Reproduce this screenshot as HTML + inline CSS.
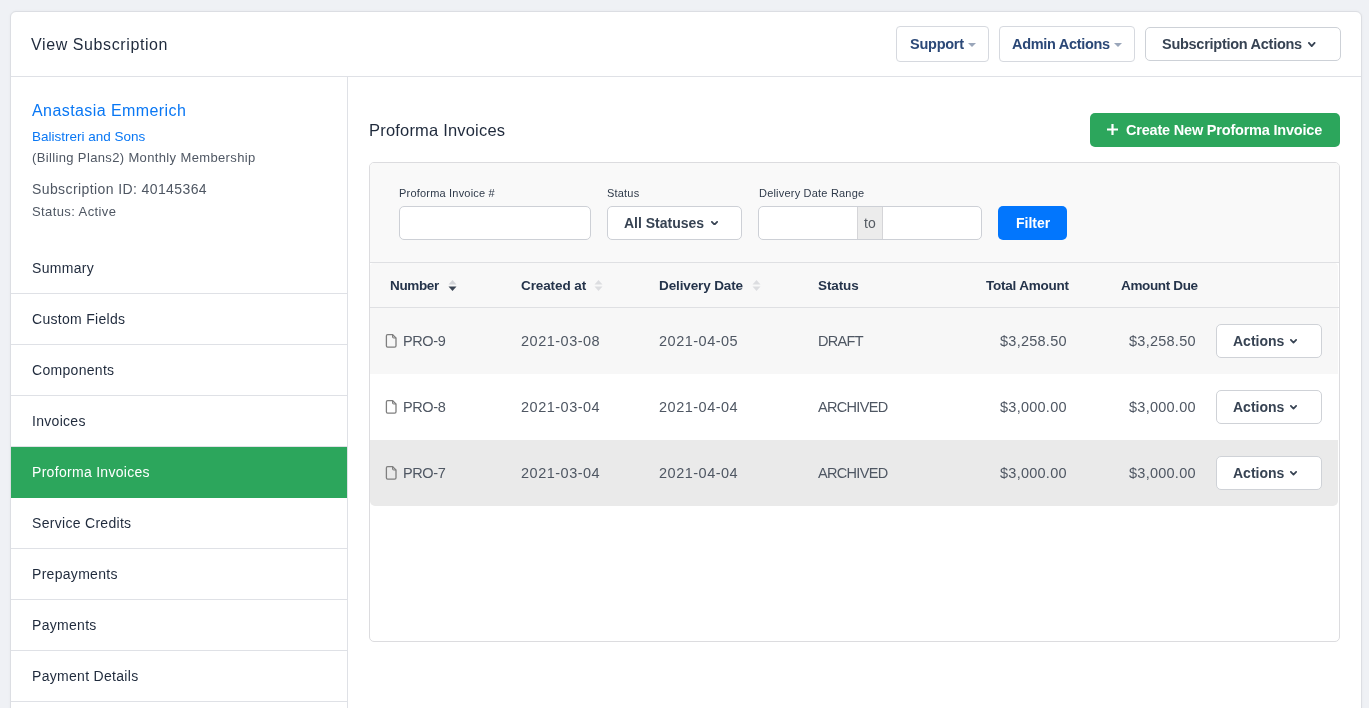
<!DOCTYPE html>
<html><head><meta charset="utf-8">
<style>
*{box-sizing:border-box;margin:0;padding:0}
html,body{width:1369px;height:708px;overflow:hidden}
body{background:#eff1f5;font-family:"Liberation Sans",sans-serif;position:relative}
.t{position:absolute;white-space:nowrap;will-change:transform}
.r{position:absolute}
</style></head><body>
<div class="r" style="left:10px;top:11px;width:1352px;height:760px;background:#fff;border:1px solid #dcdee3;border-radius:6px;box-shadow:0 0 3px rgba(0,0,0,0.04)"></div>
<div class="r" style="left:11px;top:76px;width:1350px;height:1px;background:#dfe1e6"></div>
<div class="t" style="left:31.40px;top:37.06px;font-size:16px;line-height:16px;font-weight:400;color:#1f2a3c;letter-spacing:0.6px;">View Subscription</div>
<div class="r" style="left:896px;top:26px;width:93px;height:36px;background:#fff;border:1px solid #d6d9df;border-radius:4px"></div>
<div class="t" style="left:909.80px;top:36.63px;font-size:14.5px;line-height:14.5px;font-weight:700;color:#2b4877;letter-spacing:-0.25px;">Support</div>
<svg class="r" style="left:968px;top:43px" width="8" height="4" viewBox="0 0 8 4"><path d="M0 0H8L4.0 4Z" fill="#9aa6ba"/></svg>
<div class="r" style="left:999px;top:26px;width:136px;height:36px;background:#fff;border:1px solid #d6d9df;border-radius:4px"></div>
<div class="t" style="left:1011.90px;top:36.63px;font-size:14.5px;line-height:14.5px;font-weight:700;color:#2b4877;letter-spacing:-0.3px;">Admin Actions</div>
<svg class="r" style="left:1114px;top:43px" width="8" height="4" viewBox="0 0 8 4"><path d="M0 0H8L4.0 4Z" fill="#9aa6ba"/></svg>
<div class="r" style="left:1145px;top:27px;width:196px;height:34px;background:#fff;border:1px solid #cdd1d7;border-radius:5px"></div>
<div class="t" style="left:1162.40px;top:36.63px;font-size:14.5px;line-height:14.5px;font-weight:700;color:#374353;letter-spacing:-0.27px;">Subscription Actions</div>
<svg class="r" style="left:1308px;top:42px" width="7.5" height="5" viewBox="0 0 7.5 5"><path d="M0.9 0.9L3.75 4.1L6.6 0.9" fill="none" stroke="#374353" stroke-width="1.8" stroke-linecap="round" stroke-linejoin="round"/></svg>
<div class="r" style="left:347px;top:77px;width:1px;height:700px;background:#dfe1e6"></div>
<div class="t" style="left:32.00px;top:103.46px;font-size:16px;line-height:16px;font-weight:400;color:#0977f4;letter-spacing:0.42px;">Anastasia Emmerich</div>
<div class="t" style="left:32.00px;top:129.57px;font-size:13.5px;line-height:13.5px;font-weight:400;color:#0977f4;letter-spacing:0.0px;">Balistreri and Sons</div>
<div class="t" style="left:32.00px;top:150.80px;font-size:13px;line-height:13px;font-weight:400;color:#4f5763;letter-spacing:0.36px;">(Billing Plans2) Monthly Membership</div>
<div class="t" style="left:32.00px;top:182.05px;font-size:14px;line-height:14px;font-weight:400;color:#4f5763;letter-spacing:0.4px;">Subscription ID: 40145364</div>
<div class="t" style="left:32.00px;top:204.80px;font-size:13px;line-height:13px;font-weight:400;color:#4f5763;letter-spacing:0.4px;">Status: Active</div>
<div class="t" style="left:31.50px;top:261.05px;font-size:14px;line-height:14px;font-weight:400;color:#1f2a3c;letter-spacing:0.3px;">Summary</div>
<div class="r" style="left:11px;top:293px;width:336px;height:1px;background:#dfe1e6"></div>
<div class="t" style="left:31.50px;top:312.05px;font-size:14px;line-height:14px;font-weight:400;color:#1f2a3c;letter-spacing:0.3px;">Custom Fields</div>
<div class="r" style="left:11px;top:344px;width:336px;height:1px;background:#dfe1e6"></div>
<div class="t" style="left:31.50px;top:363.05px;font-size:14px;line-height:14px;font-weight:400;color:#1f2a3c;letter-spacing:0.3px;">Components</div>
<div class="r" style="left:11px;top:395px;width:336px;height:1px;background:#dfe1e6"></div>
<div class="t" style="left:31.50px;top:414.05px;font-size:14px;line-height:14px;font-weight:400;color:#1f2a3c;letter-spacing:0.3px;">Invoices</div>
<div class="r" style="left:11px;top:446px;width:336px;height:1px;background:#dfe1e6"></div>
<div class="r" style="left:11px;top:447px;width:336px;height:51px;background:#2ca65c"></div>
<div class="t" style="left:31.50px;top:465.05px;font-size:14px;line-height:14px;font-weight:400;color:#ffffff;letter-spacing:0.3px;">Proforma Invoices</div>
<div class="t" style="left:31.50px;top:516.05px;font-size:14px;line-height:14px;font-weight:400;color:#1f2a3c;letter-spacing:0.3px;">Service Credits</div>
<div class="r" style="left:11px;top:548px;width:336px;height:1px;background:#dfe1e6"></div>
<div class="t" style="left:31.50px;top:567.05px;font-size:14px;line-height:14px;font-weight:400;color:#1f2a3c;letter-spacing:0.3px;">Prepayments</div>
<div class="r" style="left:11px;top:599px;width:336px;height:1px;background:#dfe1e6"></div>
<div class="t" style="left:31.50px;top:618.05px;font-size:14px;line-height:14px;font-weight:400;color:#1f2a3c;letter-spacing:0.3px;">Payments</div>
<div class="r" style="left:11px;top:650px;width:336px;height:1px;background:#dfe1e6"></div>
<div class="t" style="left:31.50px;top:669.05px;font-size:14px;line-height:14px;font-weight:400;color:#1f2a3c;letter-spacing:0.3px;">Payment Details</div>
<div class="r" style="left:11px;top:701px;width:336px;height:1px;background:#dfe1e6"></div>
<div class="r" style="left:11px;top:752px;width:336px;height:1px;background:#dfe1e6"></div>
<div class="t" style="left:369.10px;top:122.03px;font-size:16.5px;line-height:16.5px;font-weight:400;color:#1f2a3c;letter-spacing:0.19px;">Proforma Invoices</div>
<div class="r" style="left:1090px;top:113px;width:250px;height:34px;background:#2ca65c;border-radius:5px"></div>
<svg class="r" style="left:1106.5px;top:124px" width="11" height="11" viewBox="0 0 11 11"><path d="M5.5 0V11M0 5.5H11" stroke="#fff" stroke-width="2.2"/></svg>
<div class="t" style="left:1126.00px;top:122.93px;font-size:14.5px;line-height:14.5px;font-weight:700;color:#fff;letter-spacing:-0.2px;">Create New Proforma Invoice</div>
<div class="r" style="left:369px;top:162px;width:971px;height:480px;background:#fff;border:1px solid #dcdcdf;border-radius:5px"></div>
<div class="r" style="left:370px;top:163px;width:969px;height:99px;background:#f9f9f9;border-radius:4px 4px 0 0"></div>
<div class="r" style="left:370px;top:263px;width:968px;height:44px;background:#f8f8f8;border-radius:4px 4px 0 0"></div>
<div class="t" style="left:398.80px;top:187.59px;font-size:11px;line-height:11px;font-weight:400;color:#2f3a4a;letter-spacing:0.2px;">Proforma Invoice #</div>
<div class="r" style="left:399px;top:206px;width:192px;height:34px;background:#fff;border:1px solid #cdd0d6;border-radius:5px"></div>
<div class="t" style="left:607.00px;top:187.59px;font-size:11px;line-height:11px;font-weight:400;color:#2f3a4a;letter-spacing:0.2px;">Status</div>
<div class="r" style="left:607px;top:206px;width:135px;height:34px;background:#fff;border:1px solid #cdd0d6;border-radius:5px"></div>
<div class="t" style="left:624.10px;top:215.75px;font-size:14px;line-height:14px;font-weight:700;color:#374353;letter-spacing:0px;">All Statuses</div>
<svg class="r" style="left:710.5px;top:220.5px" width="7" height="4.5" viewBox="0 0 7 4.5"><path d="M0.85 0.85L3.5 3.65L6.15 0.85" fill="none" stroke="#374353" stroke-width="1.7" stroke-linecap="round" stroke-linejoin="round"/></svg>
<div class="t" style="left:758.80px;top:187.59px;font-size:11px;line-height:11px;font-weight:400;color:#2f3a4a;letter-spacing:0.2px;">Delivery Date Range</div>
<div class="r" style="left:758px;top:206px;width:224px;height:34px;background:#fff;border:1px solid #cdd0d6;border-radius:5px"></div>
<div class="r" style="left:857px;top:207px;width:26px;height:32px;background:#ececec;border-left:1px solid #d5d5d8;border-right:1px solid #d5d5d8"></div>
<div class="t" style="left:864.00px;top:215.75px;font-size:14px;line-height:14px;font-weight:400;color:#555b63;letter-spacing:0px;">to</div>
<div class="r" style="left:998px;top:206px;width:69px;height:34px;background:#0276fd;border-radius:5px"></div>
<div class="t" style="left:1015.90px;top:215.75px;font-size:14px;line-height:14px;font-weight:700;color:#fff;letter-spacing:0px;">Filter</div>
<div class="r" style="left:370px;top:262px;width:969px;height:1px;background:#dfe0e3"></div>
<div class="r" style="left:370px;top:307px;width:969px;height:1px;background:#dfe0e3"></div>
<div class="t" style="left:389.90px;top:278.67px;font-size:13.5px;line-height:13.5px;font-weight:700;color:#25344b;letter-spacing:-0.35px;">Number</div>
<div class="t" style="left:520.60px;top:278.67px;font-size:13.5px;line-height:13.5px;font-weight:700;color:#25344b;letter-spacing:-0.1px;">Created at</div>
<div class="t" style="left:659.40px;top:278.67px;font-size:13.5px;line-height:13.5px;font-weight:700;color:#25344b;letter-spacing:-0.12px;">Delivery Date</div>
<div class="t" style="left:818.40px;top:278.67px;font-size:13.5px;line-height:13.5px;font-weight:700;color:#25344b;letter-spacing:-0.1px;">Status</div>
<div class="t" style="left:985.60px;top:278.67px;font-size:13.5px;line-height:13.5px;font-weight:700;color:#25344b;letter-spacing:-0.22px;">Total Amount</div>
<div class="t" style="left:1120.50px;top:278.67px;font-size:13.5px;line-height:13.5px;font-weight:700;color:#25344b;letter-spacing:-0.35px;">Amount Due</div>
<svg class="r" style="left:448px;top:279px" width="9" height="13" viewBox="0 0 9 13"><path d="M0.5 5.5L4.5 1L8.5 5.5Z" fill="#d2d4d8"/><path d="M0.5 7.5L4.5 12L8.5 7.5Z" fill="#3a4453"/></svg>
<svg class="r" style="left:594px;top:279px" width="9" height="13" viewBox="0 0 9 13"><path d="M0.5 5.5L4.5 1L8.5 5.5Z" fill="#dcdde0"/><path d="M0.5 7.5L4.5 12L8.5 7.5Z" fill="#dcdde0"/></svg>
<svg class="r" style="left:751.5px;top:279px" width="9" height="13" viewBox="0 0 9 13"><path d="M0.5 5.5L4.5 1L8.5 5.5Z" fill="#dcdde0"/><path d="M0.5 7.5L4.5 12L8.5 7.5Z" fill="#dcdde0"/></svg>
<div class="r" style="left:370px;top:308px;width:968px;height:66px;background:#f7f7f7;"></div>
<svg class="r" style="left:385px;top:333px" width="13" height="16" viewBox="0 0 13 16"><path d="M2.6 1.6H7.6L11 5V12.8Q11 14.2 9.6 14.2H2.6Q1.4 14.2 1.4 12.8V3Q1.4 1.6 2.6 1.6Z" fill="none" stroke="#7f7f7f" stroke-width="1.3" stroke-linejoin="round"/><path d="M7.6 1.6V3.8Q7.6 5 8.8 5H11" fill="none" stroke="#7f7f7f" stroke-width="1.2"/></svg>
<div class="t" style="left:402.80px;top:333.73px;font-size:14.5px;line-height:14.5px;font-weight:400;color:#4f5763;letter-spacing:-0.4px;">PRO-9</div>
<div class="t" style="left:520.60px;top:333.73px;font-size:14.5px;line-height:14.5px;font-weight:400;color:#4f5763;letter-spacing:0.5px;">2021-03-08</div>
<div class="t" style="left:659.40px;top:333.73px;font-size:14.5px;line-height:14.5px;font-weight:400;color:#4f5763;letter-spacing:0.5px;">2021-04-05</div>
<div class="t" style="left:818.40px;top:333.73px;font-size:14.5px;line-height:14.5px;font-weight:400;color:#4f5763;letter-spacing:-0.68px;">DRAFT</div>
<div class="t" style="right:302.50px;top:333.73px;font-size:14.5px;line-height:14.5px;font-weight:400;color:#4f5763;letter-spacing:0.25px;">$3,258.50</div>
<div class="t" style="right:173.00px;top:333.73px;font-size:14.5px;line-height:14.5px;font-weight:400;color:#4f5763;letter-spacing:0.25px;">$3,258.50</div>
<div class="r" style="left:1216px;top:324px;width:106px;height:34px;background:#fff;border:1px solid #cfd2d7;border-radius:5px"></div>
<div class="t" style="left:1233.20px;top:334.15px;font-size:14px;line-height:14px;font-weight:700;color:#374353;letter-spacing:0px;">Actions</div>
<svg class="r" style="left:1289.5px;top:339px" width="7" height="4.5" viewBox="0 0 7 4.5"><path d="M0.85 0.85L3.5 3.65L6.15 0.85" fill="none" stroke="#374353" stroke-width="1.7" stroke-linecap="round" stroke-linejoin="round"/></svg>
<div class="r" style="left:370px;top:374px;width:968px;height:66px;background:#ffffff;"></div>
<svg class="r" style="left:385px;top:399px" width="13" height="16" viewBox="0 0 13 16"><path d="M2.6 1.6H7.6L11 5V12.8Q11 14.2 9.6 14.2H2.6Q1.4 14.2 1.4 12.8V3Q1.4 1.6 2.6 1.6Z" fill="none" stroke="#7f7f7f" stroke-width="1.3" stroke-linejoin="round"/><path d="M7.6 1.6V3.8Q7.6 5 8.8 5H11" fill="none" stroke="#7f7f7f" stroke-width="1.2"/></svg>
<div class="t" style="left:402.80px;top:399.73px;font-size:14.5px;line-height:14.5px;font-weight:400;color:#4f5763;letter-spacing:-0.4px;">PRO-8</div>
<div class="t" style="left:520.60px;top:399.73px;font-size:14.5px;line-height:14.5px;font-weight:400;color:#4f5763;letter-spacing:0.5px;">2021-03-04</div>
<div class="t" style="left:659.40px;top:399.73px;font-size:14.5px;line-height:14.5px;font-weight:400;color:#4f5763;letter-spacing:0.5px;">2021-04-04</div>
<div class="t" style="left:818.40px;top:399.73px;font-size:14.5px;line-height:14.5px;font-weight:400;color:#4f5763;letter-spacing:-0.68px;">ARCHIVED</div>
<div class="t" style="right:302.50px;top:399.73px;font-size:14.5px;line-height:14.5px;font-weight:400;color:#4f5763;letter-spacing:0.25px;">$3,000.00</div>
<div class="t" style="right:173.00px;top:399.73px;font-size:14.5px;line-height:14.5px;font-weight:400;color:#4f5763;letter-spacing:0.25px;">$3,000.00</div>
<div class="r" style="left:1216px;top:390px;width:106px;height:34px;background:#fff;border:1px solid #cfd2d7;border-radius:5px"></div>
<div class="t" style="left:1233.20px;top:400.15px;font-size:14px;line-height:14px;font-weight:700;color:#374353;letter-spacing:0px;">Actions</div>
<svg class="r" style="left:1289.5px;top:405px" width="7" height="4.5" viewBox="0 0 7 4.5"><path d="M0.85 0.85L3.5 3.65L6.15 0.85" fill="none" stroke="#374353" stroke-width="1.7" stroke-linecap="round" stroke-linejoin="round"/></svg>
<div class="r" style="left:370px;top:440px;width:968px;height:66px;background:#eaeaea;border-radius:0 0 5px 5px;"></div>
<svg class="r" style="left:385px;top:465px" width="13" height="16" viewBox="0 0 13 16"><path d="M2.6 1.6H7.6L11 5V12.8Q11 14.2 9.6 14.2H2.6Q1.4 14.2 1.4 12.8V3Q1.4 1.6 2.6 1.6Z" fill="none" stroke="#7f7f7f" stroke-width="1.3" stroke-linejoin="round"/><path d="M7.6 1.6V3.8Q7.6 5 8.8 5H11" fill="none" stroke="#7f7f7f" stroke-width="1.2"/></svg>
<div class="t" style="left:402.80px;top:465.73px;font-size:14.5px;line-height:14.5px;font-weight:400;color:#4f5763;letter-spacing:-0.4px;">PRO-7</div>
<div class="t" style="left:520.60px;top:465.73px;font-size:14.5px;line-height:14.5px;font-weight:400;color:#4f5763;letter-spacing:0.5px;">2021-03-04</div>
<div class="t" style="left:659.40px;top:465.73px;font-size:14.5px;line-height:14.5px;font-weight:400;color:#4f5763;letter-spacing:0.5px;">2021-04-04</div>
<div class="t" style="left:818.40px;top:465.73px;font-size:14.5px;line-height:14.5px;font-weight:400;color:#4f5763;letter-spacing:-0.68px;">ARCHIVED</div>
<div class="t" style="right:302.50px;top:465.73px;font-size:14.5px;line-height:14.5px;font-weight:400;color:#4f5763;letter-spacing:0.25px;">$3,000.00</div>
<div class="t" style="right:173.00px;top:465.73px;font-size:14.5px;line-height:14.5px;font-weight:400;color:#4f5763;letter-spacing:0.25px;">$3,000.00</div>
<div class="r" style="left:1216px;top:456px;width:106px;height:34px;background:#fff;border:1px solid #cfd2d7;border-radius:5px"></div>
<div class="t" style="left:1233.20px;top:466.15px;font-size:14px;line-height:14px;font-weight:700;color:#374353;letter-spacing:0px;">Actions</div>
<svg class="r" style="left:1289.5px;top:471px" width="7" height="4.5" viewBox="0 0 7 4.5"><path d="M0.85 0.85L3.5 3.65L6.15 0.85" fill="none" stroke="#374353" stroke-width="1.7" stroke-linecap="round" stroke-linejoin="round"/></svg>
</body></html>
